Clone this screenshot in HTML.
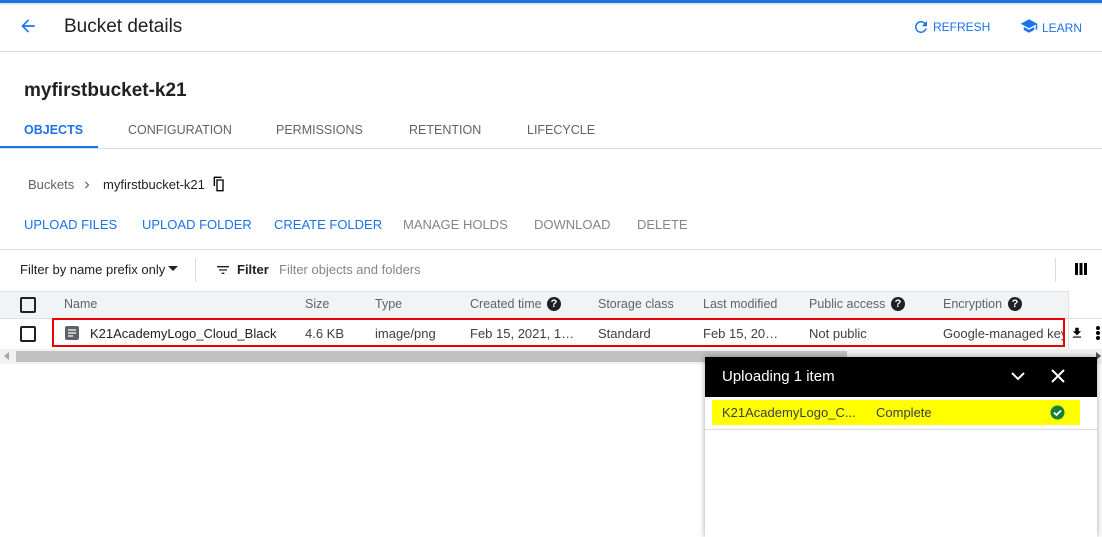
<!DOCTYPE html><html><head><style>
*{margin:0;padding:0;box-sizing:border-box}
body{width:1102px;height:530px;overflow:hidden;background:#fff;font-family:"Liberation Sans",Arial,sans-serif;position:relative;color:#202124}
.a{position:absolute;white-space:nowrap}
.btn{font-size:13px;color:#1a73e8}
.dis{color:#80868b}
.tab{font-size:12.5px;color:#5f6368;top:123px}
.h{font-size:12.5px;color:#5f6368;top:297px}
.c{font-size:13px;color:#3c4043;top:326px}
.q{width:14px;height:14px;border-radius:50%;background:#202124;color:#fff;font-size:11px;font-weight:bold;text-align:center;line-height:14px}
.cb{width:16px;height:16px;border:2px solid #202124;border-radius:2px}
</style></head><body>
<div class="a" style="left:0;top:0;width:1102px;height:3px;background:#1a73e8"></div>
<div class="a" style="left:0;top:3px;width:1102px;height:3px;background:linear-gradient(#ddd,#fff)"></div>
<svg class="a" style="left:18px;top:16px" width="20" height="20" viewBox="0 0 24 24"><path d="M20 11H7.8l5.6-5.6L12 4l-8 8 8 8 1.4-1.4L7.8 13H20z" fill="#1a73e8"/></svg>
<div class="a" style="left:64px;top:16px;font-size:19px">Bucket details</div>
<svg class="a" style="left:912px;top:18px" width="18" height="18" viewBox="0 0 24 24"><path d="M17.65 6.35A7.96 7.96 0 0 0 12 4a8 8 0 1 0 7.73 10h-2.08A6 6 0 1 1 12 6c1.66 0 3.14.69 4.22 1.78L13 11h7V4z" fill="#1a73e8"/></svg>
<div class="a btn" style="left:933px;top:20px;font-size:12px">REFRESH</div>
<svg class="a" style="left:1020px;top:17px" width="18" height="18" viewBox="0 0 24 24"><path d="M5 13.2v4L12 21l7-3.8v-4L12 17zM12 3 1 9l11 6 9-4.9V17h2V9z" fill="#1a73e8"/></svg>
<div class="a btn" style="left:1042px;top:21px;font-size:12px">LEARN</div>
<div class="a" style="left:0;top:51px;width:1102px;height:1px;background:#dadce0"></div>
<div class="a" style="left:24px;top:80px;font-size:19px;font-weight:bold">myfirstbucket-k21</div>
<div class="a tab" style="left:24px;color:#1a73e8;font-weight:bold">OBJECTS</div>
<div class="a tab" style="left:128px">CONFIGURATION</div>
<div class="a tab" style="left:276px">PERMISSIONS</div>
<div class="a tab" style="left:409px">RETENTION</div>
<div class="a tab" style="left:527px">LIFECYCLE</div>
<div class="a" style="left:0;top:146px;width:98px;height:3px;background:#1a73e8"></div>
<div class="a" style="left:0;top:148px;width:1102px;height:1px;background:#dadce0"></div>
<div class="a" style="left:28px;top:177px;font-size:13px;color:#5f6368">Buckets</div>
<svg class="a" style="left:80px;top:178px" width="14" height="14" viewBox="0 0 24 24"><path d="M8.6 16.6 13.2 12 8.6 7.4 10 6l6 6-6 6z" fill="#5f6368"/></svg>
<div class="a" style="left:103px;top:177px;font-size:13px">myfirstbucket-k21</div>
<svg class="a" style="left:211px;top:176px" width="16" height="16" viewBox="0 0 24 24"><path d="M16 1H4v14h2V3h10zm3 4H8v18h11zm-2 16h-7V7h7z" fill="#000"/></svg>
<div class="a btn" style="left:24px;top:217px">UPLOAD FILES</div>
<div class="a btn" style="left:142px;top:217px">UPLOAD FOLDER</div>
<div class="a btn" style="left:274px;top:217px">CREATE FOLDER</div>
<div class="a btn dis" style="left:403px;top:217px">MANAGE HOLDS</div>
<div class="a btn dis" style="left:534px;top:217px">DOWNLOAD</div>
<div class="a btn dis" style="left:637px;top:217px">DELETE</div>
<div class="a" style="left:0;top:249px;width:1102px;height:1px;background:#dadce0"></div>
<div class="a" style="left:20px;top:262px;font-size:13px">Filter by name prefix only</div>
<svg class="a" style="left:167px;top:265px" width="12" height="8"><path d="M1 1h10L6 6z" fill="#202124"/></svg>
<div class="a" style="left:195px;top:258px;width:1px;height:24px;background:#dadce0"></div>
<svg class="a" style="left:215px;top:262px" width="16" height="16" viewBox="0 0 24 24"><path d="M3 6h18v2H3zm3 5h12v2H6zm4 5h4v2h-4z" fill="#202124"/></svg>
<div class="a" style="left:237px;top:262px;font-size:13px;font-weight:bold">Filter</div>
<div class="a" style="left:279px;top:262px;font-size:13px;color:#80868b">Filter objects and folders</div>
<div class="a" style="left:1055px;top:258px;width:1px;height:24px;background:#dadce0"></div>
<svg class="a" style="left:1074px;top:262px" width="14" height="14"><rect x="1" y="1" width="3" height="12" fill="#000"/><rect x="5.5" y="1" width="3" height="12" fill="#000"/><rect x="10" y="1" width="3" height="12" fill="#000"/></svg>
<div class="a" style="left:0;top:291px;width:1068px;height:27px;background:#f1f3f4;border-top:1px solid #e0e0e0"></div>
<div class="a" style="left:1068px;top:291px;width:1px;height:58px;background:#e0e0e0"></div>
<div class="a cb" style="left:20px;top:297px"></div>
<div class="a h" style="left:64px">Name</div>
<div class="a h" style="left:305px">Size</div>
<div class="a h" style="left:375px">Type</div>
<div class="a h" style="left:470px">Created time</div><div class="a q" style="left:547px;top:297px">?</div>
<div class="a h" style="left:598px">Storage class</div>
<div class="a h" style="left:703px">Last modified</div>
<div class="a h" style="left:809px">Public access</div><div class="a q" style="left:891px;top:297px">?</div>
<div class="a h" style="left:943px">Encryption</div><div class="a q" style="left:1008px;top:297px">?</div>
<div class="a" style="left:0;top:318px;width:1102px;height:1px;background:#e0e0e0"></div>
<div class="a cb" style="left:20px;top:326px"></div>
<div class="a" style="left:52px;top:318px;width:1013px;height:29px;border:2px solid #e00"></div>
<svg class="a" style="left:65px;top:326px" width="14" height="14"><rect width="14" height="14" rx="2" fill="#5f6368"/><path d="M3 4h8M3 7h8M3 10h5" stroke="#fff" stroke-width="1.3"/></svg>
<div class="a c" style="left:90px;color:#202124">K21AcademyLogo_Cloud_Black</div>
<div class="a c" style="left:305px">4.6 KB</div>
<div class="a c" style="left:375px">image/png</div>
<div class="a c" style="left:470px">Feb 15, 2021, 1…</div>
<div class="a c" style="left:598px">Standard</div>
<div class="a c" style="left:703px">Feb 15, 20…</div>
<div class="a c" style="left:809px">Not public</div>
<div class="a c" style="left:943px;width:120px;overflow:hidden">Google-managed key</div>
<svg class="a" style="left:1070px;top:325px" width="14" height="16" viewBox="0 0 24 24"><path d="M19 9h-4V3H9v6H5l7 7zM5 18v2h14v-2z" fill="#000"/></svg>
<svg class="a" style="left:1094px;top:325px" width="8" height="16"><circle cx="4" cy="3" r="2" fill="#000"/><circle cx="4" cy="8" r="2" fill="#000"/><circle cx="4" cy="13" r="2" fill="#000"/></svg>
<div class="a" style="left:0;top:349px;width:1102px;height:15px;background:#f1f1f1"></div>
<div class="a" style="left:16px;top:351px;width:831px;height:11px;background:#c1c1c1"></div>
<svg class="a" style="left:4px;top:352px" width="6" height="8"><path d="M5 0v8L0 4z" fill="#a3a3a3"/></svg>
<svg class="a" style="left:1096px;top:352px" width="6" height="8"><path d="M0 0v8l5-4z" fill="#505050"/></svg>
<div class="a" style="left:705px;top:357px;width:392px;height:180px;background:#fff;box-shadow:0 0 6px rgba(0,0,0,.35)"></div>
<div class="a" style="left:705px;top:357px;width:392px;height:40px;background:#000"></div>
<div class="a" style="left:722px;top:368px;font-size:15px;color:#fff">Uploading 1 item</div>
<svg class="a" style="left:1010px;top:369px" width="16" height="14"><path d="M2 4l6 6 6-6" stroke="#fff" stroke-width="2" fill="none"/></svg>
<svg class="a" style="left:1051px;top:369px" width="14" height="14"><path d="M1 1l12 12M13 1 1 13" stroke="#fff" stroke-width="2"/></svg>
<div class="a" style="left:712px;top:400px;width:368px;height:25px;background:#ffff00"></div>
<div class="a" style="left:722px;top:405px;font-size:13px;color:#3c4043">K21AcademyLogo_C...</div>
<div class="a" style="left:876px;top:405px;font-size:13px;color:#3c4043">Complete</div>
<svg class="a" style="left:1050px;top:405px" width="15" height="15"><circle cx="7.5" cy="7.5" r="7" fill="#188038"/><path d="M4 7.5l2.5 2.5 4.5-4.5" stroke="#fff" stroke-width="1.8" fill="none"/></svg>
<div class="a" style="left:705px;top:429px;width:392px;height:1px;background:#dadce0"></div>
</body></html>
